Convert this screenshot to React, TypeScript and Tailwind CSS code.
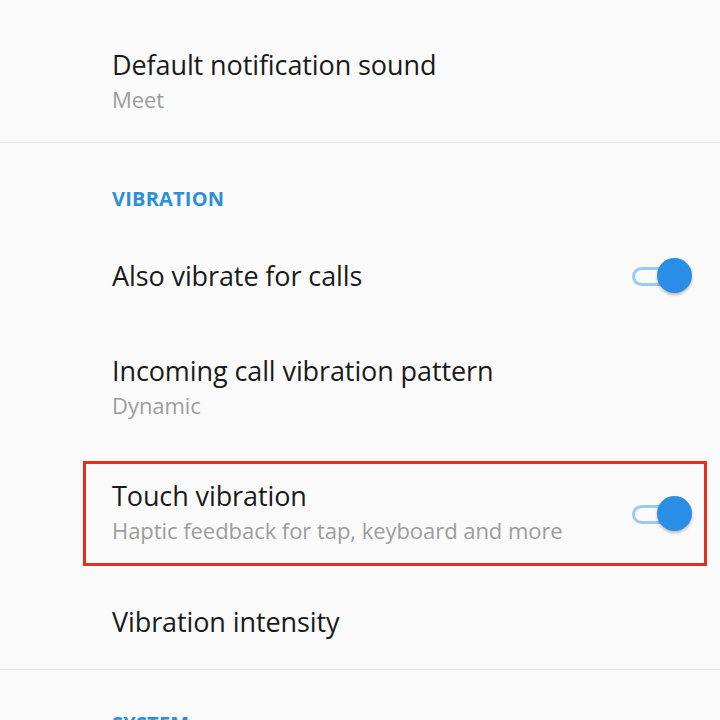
import React from "react";

function Toggle({ on }: { on: boolean }) {
  return (
    <div className="relative w-[60px] h-[36px] shrink-0">
      <div
        className={
          "absolute left-0 top-[9px] w-[48px] h-[19px] rounded-full border-[3px] " +
          (on ? "border-[#9fcaf0] bg-[#fafafa]" : "border-[#c8c8c8] bg-[#fafafa]")
        }
      />
      <div
        className={
          "absolute right-0 top-0 w-[35px] h-[35px] rounded-full shadow-[0_2px_3px_rgba(0,0,0,0.25)] " +
          (on ? "bg-[#2a8ee6]" : "bg-[#ececec]")
        }
      />
    </div>
  );
}

function Title({ children }: { children: React.ReactNode }) {
  return <div className="text-[27px] leading-[34px] text-[#1a1a1a] tracking-[-0.1px] whitespace-nowrap">{children}</div>;
}

function Summary({ children }: { children: React.ReactNode }) {
  return <div className="mt-[2px] text-[22px] leading-[30px] text-[#9d9d9d] tracking-[-0.05px] whitespace-nowrap">{children}</div>;
}

export default function App() {
  return (
    <div
      className="w-[720px] h-[720px] overflow-hidden bg-[#fafafa] flex flex-col"
      style={{ fontFamily: '"Open Sans", "Noto Sans", sans-serif' }}
    >
      {/* notification sound */}
      <div className="h-[142px] pl-[112px] pt-[48px] shrink-0">
        <Title>Default notification sound</Title>
        <Summary>Meet</Summary>
      </div>
      <div className="h-px bg-[#e4e4e4] shrink-0" />

      {/* vibration section */}
      <div className="h-[100px] pl-[112px] pt-[44px] shrink-0">
        <div className="text-[20px] leading-[24px] font-bold text-[#2b8fda] tracking-[0.2px]">VIBRATION</div>
      </div>

      <div className="h-[66px] pl-[112px] pr-[28px] flex items-center justify-between shrink-0">
        <Title>Also vibrate for calls</Title>
        <Toggle on />
      </div>

      <div className="h-[152px] pl-[112px] pt-[45px] shrink-0">
        <Title>Incoming call vibration pattern</Title>
        <Summary>Dynamic</Summary>
      </div>

      <div className="ml-[83px] w-[624px] h-[105px] border-[3px] border-[#e3301d] pl-[26px] pr-[12px] flex items-center justify-between shrink-0">
        <div className="pb-[4px]">
          <Title>Touch vibration</Title>
          <Summary>Haptic feedback for tap, keyboard and more</Summary>
        </div>
        <Toggle on />
      </div>

      <div className="h-[103px] pl-[112px] pt-[39px] shrink-0">
        <Title>Vibration intensity</Title>
      </div>
      <div className="h-px bg-[#e4e4e4] shrink-0" />

      {/* system section */}
      <div className="pl-[112px] pt-[42px] shrink-0">
        <div className="text-[20px] leading-[24px] font-bold text-[#2b8fda] tracking-[0.2px]">SYSTEM</div>
      </div>
    </div>
  );
}
